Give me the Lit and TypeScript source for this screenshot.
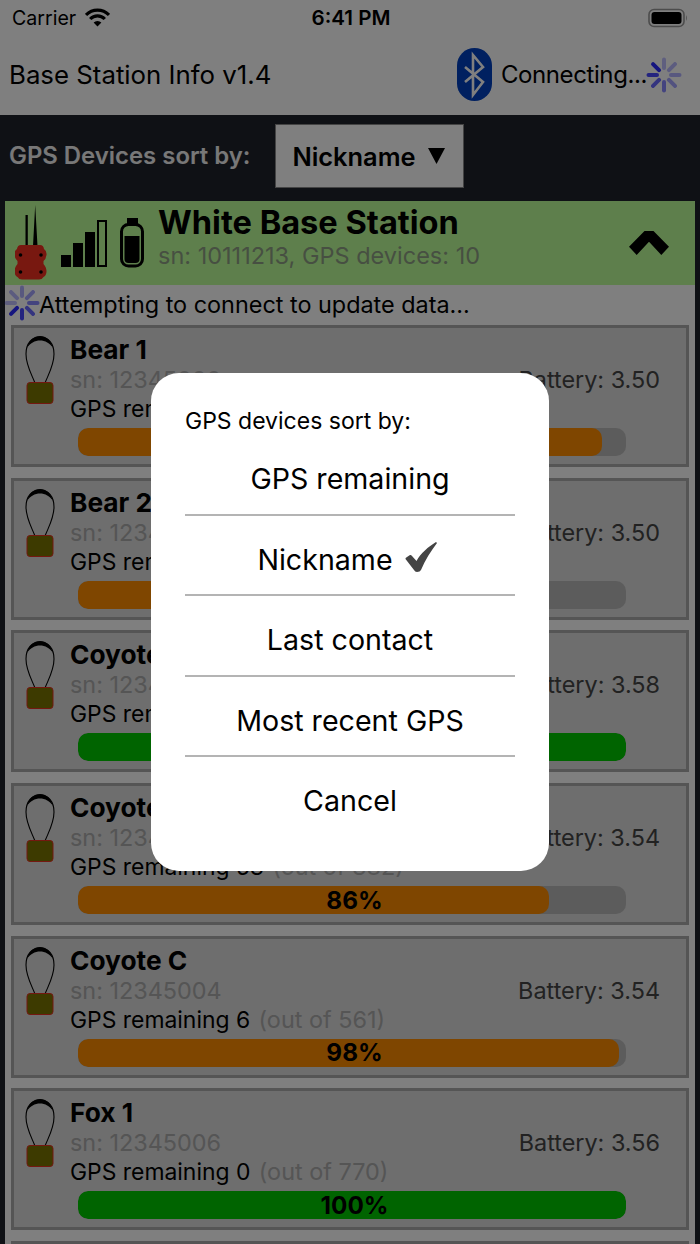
import { LitElement, html, css, svg } from "lit";
import { customElement } from "lit/decorators.js";

const DEVICES = [
  { name: "Bear 1", sn: "12345000", batt: "3.50", rem: 24, total: 545, pct: 96, fill: 95.6, color: "orange" },
  { name: "Bear 2", sn: "12345001", batt: "3.50", rem: 109, total: 545, pct: 80, fill: 80, color: "orange" },
  { name: "Coyote A", sn: "12345002", batt: "3.58", rem: 0, total: 612, pct: 100, fill: 100, color: "green" },
  { name: "Coyote B", sn: "12345003", batt: "3.54", rem: 53, total: 382, pct: 86, fill: 86, color: "orange" },
  { name: "Coyote C", sn: "12345004", batt: "3.54", rem: 6, total: 561, pct: 98, fill: 98.7, color: "orange" },
  { name: "Fox 1", sn: "12345006", batt: "3.56", rem: 0, total: 770, pct: 100, fill: 100, color: "green" },
  { name: "Fox 2", sn: "12345007", batt: "3.56", rem: 0, total: 770, pct: 100, fill: 100, color: "green" },
];

const OPTIONS = ["GPS remaining", "Nickname", "Last contact", "Most recent GPS", "Cancel"];

function spinner(head: number, cls: string) {
  const ops = [1, 0.85, 0.7, 0.55, 0.42, 0.36, 0.32, 0.3];
  const spokes = [];
  for (let i = 0; i < 8; i++) {
    const a = ((head - i * 45) * Math.PI) / 180;
    const x1 = 18 + Math.cos(a) * 7;
    const y1 = 18 + Math.sin(a) * 7;
    const x2 = 18 + Math.cos(a) * 15.5;
    const y2 = 18 + Math.sin(a) * 15.5;
    spokes.push(
      svg`<line x1=${x1} y1=${y1} x2=${x2} y2=${y2} stroke="#2a2aff" stroke-width="4" stroke-linecap="round" opacity=${ops[i]}></line>`
    );
  }
  return html`<svg class=${cls} width="36" height="36" viewBox="0 0 36 36">${spokes}</svg>`;
}

const tagIcon = html`<svg class="tag" width="32" height="72" viewBox="0 0 32 72">
  <path d="M11 48 C7 38 2 30 2 19 C2 8 8 2 16 2 C24 2 30 8 30 19 C30 30 25 38 21 48" fill="none" stroke="#000" stroke-width="1.1"></path>
  <path d="M3 13 C5 5 10 1 16 1 C22 1 27 5 29 13 C26 8 21 5.500 16 5.500 C11 5.500 6 8 3 13 Z" fill="#000"></path>
  <rect x="3" y="47.5" width="26" height="21" rx="3" fill="#7a7400" stroke="#e83020" stroke-width="1"></rect>
</svg>`;

@customElement("app-root")
export class AppRoot extends LitElement {
  static styles = css`
    :host {
      display: block;
      width: 700px;
      height: 1244px;
      overflow: hidden;
      position: relative;
      background: #1e222a;
      font-family: Inter, "Liberation Sans", sans-serif;
      color: #000;
    }
    .top { background: #fff; height: 115px; display: flex; flex-direction: column; }
    .status { height: 35px; display: grid; grid-template-columns: 1fr auto 1fr; align-items: center; padding: 0 10px 0 12px; font-size: 19.6px; }
    .status-left { display: flex; align-items: center; gap: 9px; }
    .status-right { display: flex; justify-content: flex-end; }
    .clock { font-weight: 600; font-size: 20.6px; }
    .title-row { flex: 1; display: flex; align-items: center; padding: 0 18px 2px 9px; margin-top: 1px; }
    .title { font-size: 25.8px; flex: 1; margin-top: -1px; }
    .conn { font-size: 24px; letter-spacing: -0.4px; margin-left: 9px; margin-top: -1px; }
    .spin-top { margin-left: -1px; }
    .sort { height: 86px; display: flex; align-items: center; padding: 0 0 0 9px; box-sizing: border-box; }
    .sort-label { font-size: 23.9px; font-weight: 600; color: #f0f0f0; width: 266px; margin-top: -6px; white-space: nowrap; }
    .drop { width: 189px; height: 64px; box-sizing: border-box; background: #fff; border: 1px solid #888; display: flex; align-items: center; justify-content: center; font-size: 25.4px; font-weight: 600; margin-top: -4px; padding-right: 2px; }
    .drop svg { margin-left: 12px; }
    .panel { margin: 0 5px; background: #fff; }
    .station { height: 84px; background: #bcff98; display: flex; align-items: center; padding: 0 26px 0 10px; }
    .station-icons { display: flex; align-items: flex-end; }
    .station-text { flex: 1; margin-left: 9px; align-self: flex-start; }
    .station-name { font-size: 32.6px; font-weight: 700; line-height: 42px; }
    .station-sub { font-size: 23.5px; line-height: 28px; color: #8e9f84; margin-top: -1px; white-space: nowrap; }
    .attempt { height: 40px; display: flex; align-items: center; font-size: 23.4px; }
    .attempt span { margin-left: -1px; margin-top: -1px; }
    .attempt svg { flex: none; margin-left: -1px; margin-top: -4px; }
    .list { padding: 0 6px; display: flex; flex-direction: column; gap: 10.7px; }
    .card { height: 142px; flex: none; box-sizing: border-box; border: 3px solid #aaa; background: #dcdcdc; display: grid; grid-template-columns: 56px 1fr; }
    .tag-cell { padding: 7px 0 0 10px; }
    .body { padding: 7px 26px 0 0; }
    .name { font-size: 26.3px; font-weight: 700; line-height: 29px; }
    .mid { display: flex; justify-content: space-between; line-height: 30px; font-size: 23.4px; color: #aaa; padding-top: 1px; margin-bottom: -1px; }
    .batt { color: #444; }
    .gps { font-size: 22.9px; line-height: 29px; white-space: nowrap; }
    .gps span { color: #aaa; margin-left: 2px; font-size: 23.4px; }
    .track { position: relative; height: 28px; margin: 4px 34px 0 8px; border-radius: 10px; background: #b8b8b8; overflow: hidden; }
    .fill { height: 100%; border-radius: 10px; }
    .orange { background: #ff8c00; }
    .green { background: #00c800; }
    .pct { position: absolute; inset: 0; display: flex; align-items: center; justify-content: center; font-size: 24.3px; font-weight: 700; padding-left: 5px; margin-top: -1px; }
    .dim { position: absolute; inset: 0; background: rgba(0, 0, 0, 0.5); display: flex; align-items: center; justify-content: center; }
    .dialog { width: 398px; height: 498px; box-sizing: border-box; background: #fff; border-radius: 28px; padding: 0 34px; display: flex; flex-direction: column; }
    .dlg-title { font-size: 23px; height: 62px; padding-top: 34px; box-sizing: border-box; line-height: 28px; white-space: nowrap; }
    .opt { height: 80.5px; flex: none; box-sizing: border-box; display: flex; align-items: center; justify-content: center; gap: 12px; font-size: 28.6px; border-bottom: 2px solid #b4b4b4; padding-top: 9px; }
    .opt:first-of-type { height: 80px; padding-top: 6px; }
    .opt:last-child { border-bottom: none; padding-top: 7px; }
    .check { margin-right: 5px; margin-top: -4px; }
  `;

  render() {
    return html`
      <div class="top">
        <div class="status">
          <div class="status-left">
            <span>Carrier</span>
            <svg width="25" height="19" viewBox="0 0 25 19">
              <path d="M1 7 A16 16 0 0 1 24 7" fill="none" stroke="#000" stroke-width="3.2"></path>
              <path d="M5.2 11 A10 10 0 0 1 19.8 11" fill="none" stroke="#000" stroke-width="3.2"></path>
              <path d="M12.5 18.5 L8.6 14.5 A5.5 5.5 0 0 1 16.4 14.5 Z" fill="#000"></path>
            </svg>
          </div>
          <div class="clock">6:41 PM</div>
          <div class="status-right">
            <svg width="42" height="20" viewBox="0 0 42 20">
              <rect x="1" y="1.5" width="35" height="17" rx="5" fill="none" stroke="#999" stroke-width="1.6"></rect>
              <rect x="3.5" y="4" width="30" height="12" rx="3" fill="#000"></rect>
              <path d="M38 7 Q40 10 38 13 Z" fill="#aaa"></path>
            </svg>
          </div>
        </div>
        <div class="title-row">
          <div class="title">Base Station Info v1.4</div>
          <svg width="35" height="53" viewBox="0 0 35 53">
            <rect width="35" height="53" rx="17.5" fill="#0040c0"></rect>
            <path d="M8 19 L26 34 L16 47 L16 7 L26 19 L8 34" fill="none" stroke="#fff" stroke-width="2.6"></path>
          </svg>
          <span class="conn">Connecting...</span>
          ${spinner(225, "spin-top")}
        </div>
      </div>
      <div class="sort">
        <div class="sort-label">GPS Devices sort by:</div>
        <div class="drop">Nickname
          <svg width="17" height="16" viewBox="0 0 17 16"><path d="M0 0 H17 L8.5 16 Z" fill="#000"></path></svg>
        </div>
      </div>
      <div class="panel">
        <div class="station">
          <div class="station-icons">
            <svg width="134" height="76" viewBox="15 205 134 76">
              <path d="M25.5 215 H27.800 V246 H25.500 Z M35.2 205 L37.5 246 H33 Z" fill="#000"></path>
              <path d="M21 245 H40 Q43.500 245 44 249 Q47 251 46.500 255 Q46 259 43.500 261 V264 Q46.500 267 46.500 272 Q46 276 43.500 277 Q42 279.500 39 279.500 H22 Q19 279.500 17.500 277 Q15 276 14.500 272 Q14.500 267 17.500 264 V261 Q15 259 14.500 255 Q14 251 17 249 Q17.500 245 21 245 Z" fill="#f03020"></path>
              <circle cx="20.5" cy="255" r="1.8" fill="#000"></circle>
              <circle cx="41" cy="255" r="1.8" fill="#000"></circle>
              <circle cx="20.5" cy="272" r="1.8" fill="#000"></circle>
              <circle cx="41" cy="272" r="1.8" fill="#000"></circle>
              <rect x="61" y="255" width="10" height="12" fill="#000"></rect>
              <rect x="73" y="243" width="10" height="24" fill="#000"></rect>
              <rect x="85" y="232" width="10" height="35" fill="#000"></rect>
              <rect x="98" y="221" width="8" height="45" fill="none" stroke="#000" stroke-width="2"></rect>
              <rect x="127" y="218" width="11" height="7" fill="#000"></rect>
              <rect x="121.5" y="224.5" width="21" height="41.5" rx="7" fill="none" stroke="#000" stroke-width="3"></rect>
              <path d="M124.5 236 H139.5 V259 Q139.5 263 135.5 263 H128.5 Q124.5 263 124.5 259 Z" fill="#000"></path>
            </svg>
          </div>
          <div class="station-text">
            <div class="station-name">White Base Station</div>
            <div class="station-sub">sn: 10111213, GPS devices: 10</div>
          </div>
          <svg width="40" height="24" viewBox="0 0 40 24">
            <path d="M15.5 0 H24.500 L40 15.700 L32.300 24 L20 10.700 L7.700 24 L0 15.700 Z" fill="#000"></path>
          </svg>
        </div>
        <div class="attempt">
          ${spinner(135, "")}
          <span>Attempting to connect to update data...</span>
        </div>
        <div class="list">
          ${DEVICES.map(
            (d) => html`
              <div class="card">
                <div class="tag-cell">${tagIcon}</div>
                <div class="body">
                  <div class="name">${d.name}</div>
                  <div class="mid"><span>sn: ${d.sn}</span><span class="batt">Battery: ${d.batt}</span></div>
                  <div class="gps">GPS remaining ${d.rem} <span>(out of ${d.total})</span></div>
                  <div class="track">
                    <div class="fill ${d.color}" style="width:${d.fill}%"></div>
                    <div class="pct">${d.pct}%</div>
                  </div>
                </div>
              </div>
            `
          )}
        </div>
      </div>
      <div class="dim">
        <div class="dialog">
          <div class="dlg-title">GPS devices sort by:</div>
          ${OPTIONS.map(
            (o) => html`<div class="opt">
              <span>${o}</span>
              ${o === "Nickname"
                ? html`<svg class="check" width="33" height="32" viewBox="0 0 33 32">
                    <path d="M0.5 18 Q0 17 2 16 L5 14 Q6 13.500 7 15 L11.500 20 C16 12 23 6 31 1 L32 2 C26 10 20 19 16 29 Q15 31 12 31 Q10 31 9 29 Z" fill="#444"></path>
                  </svg>`
                : ""}
            </div>`
          )}
        </div>
      </div>
    `;
  }
}
